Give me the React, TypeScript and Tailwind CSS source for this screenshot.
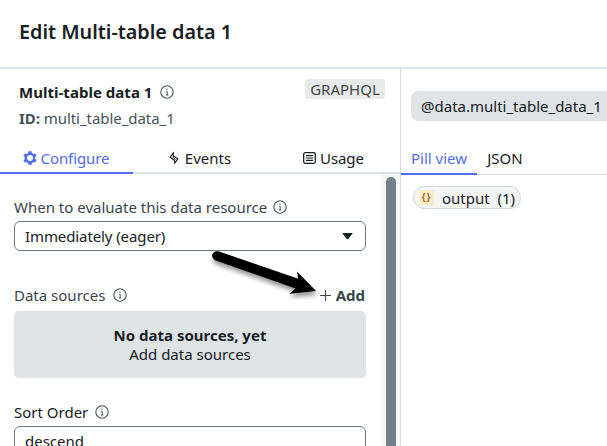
import React from "react";

function Info() {
  return (
    <svg className="size-[14px] shrink-0" viewBox="0 0 14 14" fill="none" stroke="#43535a">
      <circle cx="7" cy="7" r="6.2" strokeWidth="1.1" />
      <path d="M6.1 6.3H7.2V10M5.9 10h2.5" strokeWidth="1" />
      <circle cx="7" cy="4.2" r="0.65" fill="#43535a" stroke="none" />
    </svg>
  );
}

function Gear() {
  return (
    <svg className="size-[14px] shrink-0" viewBox="0 0 14 14" fill="none" stroke="#4f6cf0">
      <path d="M7 0.3V3.2M7 10.8v2.9M1.2 3.65l2.5 1.45M10.3 8.9l2.5 1.45M1.2 10.35l2.5-1.45M10.3 5.1l2.5-1.45" strokeWidth="3.4" />
      <circle cx="7" cy="7" r="4.2" strokeWidth="2.4" />
    </svg>
  );
}

function Bolt() {
  return (
    <svg className="h-[14px] w-[10px] shrink-0" viewBox="0 0 10 14" fill="#172023">
      <path fillRule="evenodd" d="M4.6 0.6L5.1 4.7 9.7 7.8 5.4 13.6 4.9 9.4 0.3 6.4zM3.7 3.7L2 6.1 5.9 8.7 6.3 10.5 8 8.1 4.1 5.5z" />
      <path d="M3.4 5.6L6.7 8.6" stroke="#172023" strokeWidth="0.8" />
    </svg>
  );
}

function ListIcon() {
  return (
    <svg className="h-[12px] w-[13px] shrink-0" viewBox="0 0 13 12" fill="none" stroke="#172023">
      <rect x="0.7" y="0.7" width="11.6" height="10.6" rx="1.5" strokeWidth="1.3" />
      <path d="M3 3.7h7M3 6h7M3 8.3h7" strokeWidth="1.2" />
    </svg>
  );
}

export default function App() {
  return (
    <div className="relative flex h-[446px] w-[607px] flex-col overflow-hidden bg-white font-['Noto_Sans',sans-serif] text-[15px] leading-5 text-[#172023]">
      <header className="flex h-[69px] shrink-0 items-center border-b-2 border-[#dfe5e8] pb-[3px] pl-[19px]">
        <h1 className="whitespace-nowrap text-[19.8px] font-semibold">Edit Multi-table data 1</h1>
      </header>
      <div className="flex min-h-0 flex-1">
        <section className="flex w-[401px] shrink-0 flex-col border-r border-[#d5dadd]">
          <div className="flex h-[73px] shrink-0 justify-between pl-[19px] pr-[15px] pt-[10px]">
            <div className="-mt-px">
              <div className="flex h-[27px] items-center gap-2 whitespace-nowrap font-bold tracking-[0.03px]">
                <span>Multi-table data 1</span>
                <Info />
              </div>
              <div className="flex h-[26px] items-center whitespace-pre tracking-[-0.05px] text-[#43535a]">
                <b>ID:</b> multi_table_data_1
              </div>
            </div>
            <span className="flex h-5 w-[80px] items-center justify-center rounded-[3px] bg-[#e8eaea] pb-px text-[#41474a]">GRAPHQL</span>
          </div>
          <nav className="flex h-[32px] shrink-0 border-b-2 border-[#dfe3e6]">
            <div className="-mb-[2px] flex w-[133px] items-center justify-center gap-1 border-b-2 border-[#4f6cf0] pr-px pt-px text-[#4f6cf0]">
              <Gear />
              <span className="tracking-[-0.1px]">Configure</span>
            </div>
            <div className="flex w-[134px] items-center justify-center gap-[6px] pt-px">
              <Bolt />
              <span>Events</span>
            </div>
            <div className="flex w-[133px] items-center justify-center gap-1 pt-px">
              <ListIcon />
              <span className="tracking-[-0.1px]">Usage</span>
            </div>
          </nav>
          <div className="flex min-h-0 flex-1">
            <div className="w-[381px] shrink-0 pl-[14px] pr-[15px] pt-[23px]">
              <div className="flex h-5 items-center gap-[6px] whitespace-nowrap text-[#38464c]">
                <span>When to evaluate this data resource</span>
                <Info />
              </div>
              <div className="mt-1 flex h-[30px] items-center justify-between rounded-[6px] border border-[#6f7d82] pl-[10px] pr-[12px]">
                <span className="tracking-[-0.1px]">Immediately (eager)</span>
                <svg className="h-[7px] w-[11px]" viewBox="0 0 11 7" fill="#172023">
                  <path d="M1 0h9q1 0 .4.8L6.2 6q-.7.7-1.4 0L.6.8Q0 0 1 0z" />
                </svg>
              </div>
              <div className="mt-[33px] flex h-[22px] items-center justify-between text-[#38464c]">
                <div className="flex items-center gap-2">
                  <span>Data sources</span>
                  <Info />
                </div>
                <div className="flex items-center gap-[5px] pb-px pr-[1px] font-bold">
                  <svg className="mt-px size-[11px]" viewBox="0 0 11 11" stroke="#38464c" strokeWidth="1.1">
                    <path d="M5.5 0v11M0 5.5h11" />
                  </svg>
                  <span>Add</span>
                </div>
              </div>
              <div className="mt-[5px] flex h-[67px] flex-col items-center justify-center rounded-[5px] bg-[#dfe3e6] leading-[19px]">
                <b>No data sources, yet</b>
                <span>Add data sources</span>
              </div>
              <div className="mt-[24px] flex h-5 items-center gap-[7px]">
                <span>Sort Order</span>
                <Info />
              </div>
              <div className="mt-[4px] flex h-[30px] items-center rounded-[6px] border border-[#6f7d82] pl-[10px]">descend</div>
            </div>
            <div className="flex-1 bg-[#f5f6f8] pl-[5px] pt-[3px]">
              <div className="h-[290px] w-[10px] rounded-full bg-[#738085]" />
            </div>
          </div>
        </section>
        <section className="flex min-w-0 flex-1 flex-col">
          <div className="h-[73px] shrink-0 pl-[10px] pt-[22px]">
            <div className="flex h-[30px] w-[230px] items-center whitespace-nowrap rounded-[7px] bg-[#dfe3e6] pl-[10px]">@data.multi_table_data_1</div>
          </div>
          <nav className="flex h-[33px] shrink-0 border-b border-[#d5dadd]">
            <div className="-mb-px flex w-[76px] items-center justify-center border-b-2 border-[#4f6cf0] text-[#4f6cf0]">Pill view</div>
            <div className="flex w-[56px] items-center justify-center pb-px">JSON</div>
          </nav>
          <div className="ml-[12px] mt-[11px] flex h-[23px] w-[108px] items-center rounded-full border border-[#ced6da] bg-[#f4f5f7] pl-[5px]">
            <span className="flex h-[15px] w-[15px] items-center justify-center bg-[#ffebc8] pb-px text-[10.5px] font-semibold tracking-[1px] text-[#94651a]">{"{}"}</span>
            <span className="whitespace-nowrap pl-2">output&nbsp; (1)</span>
          </div>
        </section>
      </div>
      <svg className="pointer-events-none absolute left-[205px] top-[244px] h-[62px] w-[120px] drop-shadow-[1px_4px_2px_rgba(0,0,0,0.4)]" viewBox="205 244 120 62">
        <path d="M218.3 251.3L298.2 278.8 297 271.5 316 291 289.5 293.7 295.5 288.5 215 260.2Q211.5 258.3 212.2 254.6 214 250.5 218.3 251.3z" fill="black" />
      </svg>
    </div>
  );
}
